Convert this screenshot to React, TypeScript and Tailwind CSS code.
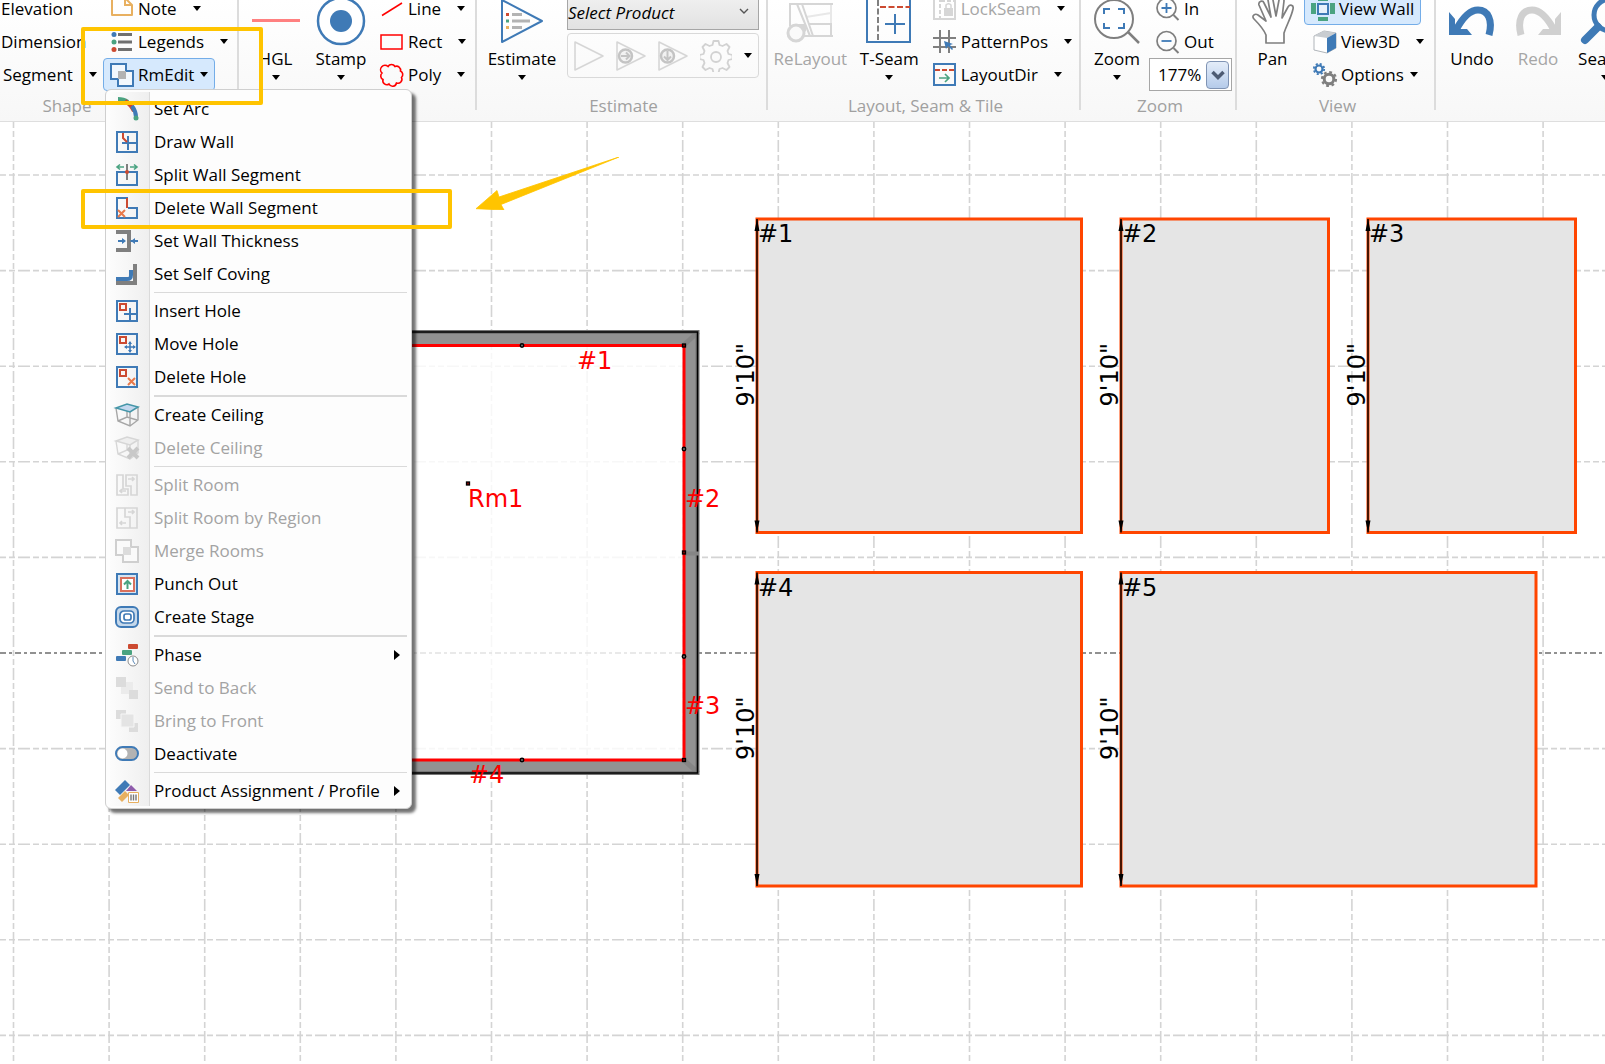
import type { ReactNode } from 'react';
import clsx from 'clsx';

const BLUE = '#3f7ab6';
const GRAY = '#7f7f7f';
const RED = '#cc4a31';
const GREEN = '#4aa381';
const ORANGE = '#e8b060';
const FAINT = '#d6d6d6';

interface SvgProps {
  children: ReactNode;
  size?: 'sm' | 'lg';
}

const Icon = ({ children, size = 'sm' }: SvgProps) => (
  <svg
    viewBox={size === 'sm' ? '0 0 24 24' : '0 0 48 48'}
    className={clsx('shrink-0 overflow-visible', size === 'sm' ? 'h-6 w-6' : 'h-12 w-12')}
    fill="none"
    aria-hidden="true"
  >
    {children}
  </svg>
);

const Caret = () => (
  <svg viewBox="0 0 8 5" className="h-[5px] w-2 shrink-0" aria-hidden="true">
    <path d="M0 0h8L4 5z" fill="#000" />
  </svg>
);

/* ---------- Ribbon icons ---------- */

const NoteIcon = () => (
  <Icon>
    <path d="M2 1h13l7 7v10H2z" stroke={ORANGE} strokeWidth="2" strokeLinejoin="round" />
    <path d="M15 1v7h7" stroke={ORANGE} strokeWidth="2" />
  </Icon>
);

const LegendsIcon = () => (
  <Icon>
    <circle cx="4" cy="4.500" r="2.500" fill={BLUE} />
    <circle cx="4" cy="12" r="2.500" fill={GREEN} />
    <circle cx="4" cy="19.500" r="2.500" fill={RED} />
    <path d="M8 4.500h14M8 12h14M8 19.500h14" stroke="#707070" strokeWidth="3" />
  </Icon>
);

const MergeIcon = ({ muted = false }: { muted?: boolean }) => (
  <Icon>
    <path
      d="M1 1h15v7h7v15H8v-7H1z"
      stroke={muted ? '#cfcfcf' : BLUE}
      strokeWidth="2"
      fill={muted ? '#fafafa' : '#f3f8fd'}
    />
    <path d="M8 8h8v8H8z" fill={muted ? '#dcdcdc' : '#b3b3b3'} />
  </Icon>
);

const HglIcon = () => (
  <Icon size="lg">
    <path d="M0 23.500h48" stroke="#ff8080" strokeWidth="3" />
  </Icon>
);

const StampIcon = () => (
  <Icon size="lg">
    <circle cx="24" cy="24" r="23" stroke={BLUE} strokeWidth="2.500" fill="#fff" />
    <circle cx="24" cy="24" r="11" fill={BLUE} />
  </Icon>
);

const LineIcon = () => (
  <Icon>
    <path d="M2 18.500 22 6" stroke="#f00" strokeWidth="1.500" />
  </Icon>
);

const RectIcon = () => (
  <Icon>
    <path d="M1 5h21v14H1z" stroke="#f00" strokeWidth="1.500" />
  </Icon>
);

const PolyIcon = () => (
  <Icon>
    <path
      d="M8 3.500A4 4 0 0 1 15 3.500 4 4 0 0 1 20.500 8 4 4 0 0 1 21.500 14.500 4 4 0 0 1 16.500 20 4 4 0 0 1 9 21 4 4 0 0 1 3 16.500 4 4 0 0 1 2 10 4 4 0 0 1 8 3.500z"
      stroke="#f00"
      strokeWidth="1.600"
    />
  </Icon>
);

const EstimateIcon = () => (
  <Icon size="lg">
    <path d="M4 3v42l40-21z" stroke={BLUE} strokeWidth="2" strokeLinejoin="round" />
    <path d="M8 16h3v3H8z" fill={RED} />
    <path d="M8 22.500h3v3H8z" fill={GREEN} />
    <path d="M8 29h3v3H8z" fill={ORANGE} />
    <path d="M14 17.500h10M14 24h18M14 30.500h10" stroke="#b3b3b3" strokeWidth="3" />
  </Icon>
);

const ReLayoutIcon = () => (
  <Icon size="lg">
    <path d="M45 27V7M20 20l25-4" stroke="#e8e8e8" strokeWidth="2" />
    <path d="M4 29V7h43M11 7l13 32M16 7l11 32M18 39h29M23 27h22v12" stroke={FAINT} strokeWidth="2" />
    <circle cx="10" cy="36" r="8" stroke={FAINT} strokeWidth="3" fill="#fafafa" />
    <path d="M11 27h9v8z" fill={FAINT} />
  </Icon>
);

const TSeamIcon = () => (
  <Icon size="lg">
    <path d="M2 2h43v43H2z" stroke={BLUE} strokeWidth="2" />
    <path d="M13 3v42" stroke={GRAY} strokeWidth="2" strokeDasharray="6 2.500" />
    <path d="M15 10h30" stroke={RED} strokeWidth="2" strokeDasharray="6 2.500" />
    <path d="M30 17v20M20 27h20" stroke={BLUE} strokeWidth="2" />
  </Icon>
);

const LockSeamIcon = () => (
  <Icon>
    <path d="M1 0h21v22H1z" stroke={FAINT} strokeWidth="2" />
    <path d="M7 1v20M8 4h14" stroke={FAINT} strokeWidth="2" strokeDasharray="4 2" />
    <path d="M11 11h9v8h-9z" fill={FAINT} />
    <path d="M13 11V8a3 3 0 0 1 5 0v3" stroke={FAINT} strokeWidth="1.500" />
  </Icon>
);

const PatternIcon = () => (
  <Icon>
    <path d="M7 0v23M16 0v23M0 8h23M0 17h23" stroke={GRAY} strokeWidth="2" />
    <path d="M11 11l9 3-3 1 3 4-1 1-4-4-2 3z" fill={BLUE} />
  </Icon>
);

const LayoutDirIcon = () => (
  <Icon>
    <path d="M1 1h21v21H1z" stroke={BLUE} strokeWidth="2" />
    <path d="M2 7h20" stroke={RED} strokeWidth="2" strokeDasharray="5 2" />
    <path d="M6 15h10M12 11l4 4-4 4" stroke={GREEN} strokeWidth="1.700" />
  </Icon>
);

const ZoomIcon = () => (
  <Icon size="lg">
    <circle cx="21" cy="22" r="19" stroke={GRAY} strokeWidth="2" fill="#fff" />
    <path d="M35 35 46 46" stroke={GRAY} strokeWidth="2.500" />
    <path d="M17 12h-6v5M25 12h6v5M17 31h-6v-5M25 31h6v-5" stroke={BLUE} strokeWidth="2" />
  </Icon>
);

const ZoomSmallIcon = ({ plus = false }: { plus?: boolean }) => (
  <Icon>
    <circle cx="10.500" cy="11" r="9.500" stroke={GRAY} strokeWidth="1.700" />
    <path d="M17.500 18l5 5" stroke={GRAY} strokeWidth="2" />
    <path d={plus ? 'M5.500 11h10M10.500 6v10' : 'M5.500 11h10'} stroke={BLUE} strokeWidth="1.800" />
  </Icon>
);

const PanIcon = () => (
  <Icon size="lg">
    <path
      d="M17 46v-8c-2-5-5-9-12-16-3-3 1-6 4-4l8 6-7-16c-1-4 4-5 5-2l7 14-3-17c0-4 5-4 5 0l3 16 3-16c1-3 5-3 5 1l-2 17 6-11c2-3 6-2 5 2-2 9-6 15-9 24v10z"
      stroke={GRAY}
      strokeWidth="1.700"
      fill="#fff"
      strokeLinejoin="round"
    />
  </Icon>
);

const ViewWallIcon = () => (
  <Icon>
    <path d="M7 7h10v10H7z" stroke={BLUE} strokeWidth="2" fill="#e8f1fb" />
    <path d="M0 6h5v11H0zM19 6h5v11h-5zM7 0h10v4H7zM7 20h10v4H7z" fill={GREEN} />
  </Icon>
);

const View3DIcon = () => (
  <Icon>
    <path d="M1 6 11 1l12 2v15l-9 5-13-3z" fill="#fff" stroke="#b0b5ba" />
    <path d="M1 6 11 1l12 2-9 5z" fill="#c9cdd1" />
    <path d="M14 8l9-5v15l-9 5z" fill={BLUE} />
  </Icon>
);

const OptionsIcon = () => (
  <Icon>
    <circle cx="6" cy="6" r="3.500" stroke={BLUE} strokeWidth="2.200" />
    <circle cx="6" cy="6" r="5.200" stroke={BLUE} strokeWidth="1.800" strokeDasharray="2.100 2" />
    <circle cx="16" cy="16" r="4.800" stroke={GRAY} strokeWidth="3" />
    <circle cx="16" cy="16" r="7" stroke={GRAY} strokeWidth="2.200" strokeDasharray="2.800 2.700" />
  </Icon>
);

const UndoIcon = ({ redo = false }: { redo?: boolean }) => (
  <Icon size="lg">
    <g transform={redo ? 'matrix(-1 0 0 1 48 0)' : undefined}>
      <path d="M8 33C15 20 22 13 30 13c10 0 15 10 11 25" stroke={redo ? '#d0d0d0' : BLUE} strokeWidth="7" />
      <path d="M1 15l6 7v10h12l5 6H1z" fill={redo ? '#d0d0d0' : BLUE} />
    </g>
  </Icon>
);

const SearchIcon = () => (
  <Icon size="lg">
    <circle cx="29" cy="18" r="16" stroke={BLUE} strokeWidth="5" />
    <path d="M17 30 4 43" stroke={BLUE} strokeWidth="8" strokeLinecap="round" />
  </Icon>
);

const PlayIcon = ({ arrow }: { arrow?: 'right' | 'down' }) => (
  <svg viewBox="0 0 30 30" className="h-[30px] w-[30px]" fill="none" aria-hidden="true">
    <path d="M1 1v28l28-14z" stroke={FAINT} strokeWidth="1.600" strokeLinejoin="round" />
    {arrow && <circle cx="9.500" cy="15" r="6.500" stroke="#c4c4c4" strokeWidth="2.500" fill="#f2f2f2" />}
    {arrow === 'right' && <path d="M5 15h8M10 11.500l3.500 3.500-3.500 3.500" stroke="#c4c4c4" strokeWidth="2" />}
    {arrow === 'down' && <path d="M9.500 10v9M6 15.500l3.500 3.500 3.500-3.500" stroke="#c4c4c4" strokeWidth="2" />}
  </svg>
);

const GearIcon = () => (
  <svg viewBox="0 0 32 32" className="h-8 w-8" fill="none" aria-hidden="true">
    <path
      d="M13.500 1h5l1 4 3 1 4-2 3 3-2 4 1 3 4 1v4l-4 1-1 3 2 4-3 3-4-2-3 1-1 4h-5l-1-4-3-1-4 2-3-3 2-4-1-3-4-1v-4l4-1 1-3-2-4 3-3 4 2 3-1z"
      stroke="#d2d2d2"
      strokeWidth="1.800"
      strokeLinejoin="round"
    />
    <circle cx="16" cy="17" r="5" stroke="#d2d2d2" strokeWidth="1.800" />
  </svg>
);

/* ---------- Menu icons ---------- */

const SetArcIcon = () => (
  <Icon>
    <path d="M3 2c4 0 7 1 10 3" stroke={GREEN} strokeWidth="4" />
    <path d="M10 4c5 3 7 6 9 10" stroke={RED} strokeWidth="4" />
    <path d="M17 9c3 4 4 7 4 11" stroke={BLUE} strokeWidth="4" />
    <circle cx="21" cy="21" r="2.500" fill={GREEN} />
  </Icon>
);

const DrawWallIcon = () => (
  <Icon>
    <path d="M2 2h20v20H2z" stroke={BLUE} strokeWidth="2" />
    <path d="M13 6v14M7 13h14" stroke={BLUE} strokeWidth="2" />
    <path d="M8 3v5l4 4" stroke={RED} strokeWidth="2" />
  </Icon>
);

const SplitWallIcon = () => (
  <Icon>
    <path d="M2 9h20v13H2z" stroke={BLUE} strokeWidth="2" />
    <path d="M12 1v16" stroke={GRAY} strokeWidth="2" />
    <circle cx="12" cy="9" r="2" fill={RED} />
    <path d="M2 4h7M5 1.500 2 4l3 2.500M22 4h-7M19 1.500 22 4l-3 2.500" stroke={GREEN} strokeWidth="1.600" />
  </Icon>
);

const DeleteWallIcon = () => (
  <Icon>
    <path d="M13 2H2v20h20V12h-9" stroke={BLUE} strokeWidth="2" />
    <path d="M12 2v10" stroke={RED} strokeWidth="2" />
    <path d="M3 14l7 7M10 14l-7 7" stroke="#e8794a" strokeWidth="2" />
  </Icon>
);

const ThicknessIcon = () => (
  <Icon>
    <path d="M1 3h13v18H1" stroke={GRAY} strokeWidth="4" />
    <path d="M3 12h6M15.500 12H23" stroke={BLUE} strokeWidth="2" />
    <path d="M7 9l4 3-4 3zM20 9l-4 3 4 3z" fill={BLUE} />
  </Icon>
);

const CovingIcon = () => (
  <Icon>
    <path d="M1 21h19V2" stroke={GRAY} strokeWidth="4" />
    <path d="M1 17h11c3 0 4-1 4-4V8" stroke={BLUE} strokeWidth="4" />
  </Icon>
);

const HoleIcon = ({ kind }: { kind: 'insert' | 'move' | 'delete' }) => (
  <Icon>
    <path d="M2 2h20v20H2z" stroke={BLUE} strokeWidth="2" />
    <path d="M5 5h6v6H5z" stroke={RED} strokeWidth="2" />
    {kind === 'insert' && <path d="M15 9v13M9 15h13" stroke={BLUE} strokeWidth="2" />}
    {kind === 'move' && (
      <>
        <path d="M15 10v10M10 15h10" stroke={BLUE} strokeWidth="1.600" />
        <path d="M15 9l2 3h-4zM15 21l2-3h-4zM9 15l3-2v4zM21 15l-3-2v4z" fill={BLUE} />
      </>
    )}
    {kind === 'delete' && <path d="M13 13l7 7M20 13l-7 7" stroke="#e8794a" strokeWidth="2" />}
  </Icon>
);

const CeilingIcon = ({ muted = false }: { muted?: boolean }) => (
  <Icon>
    <path
      d="M1 5l2 13 12 5 8-6V4M15 8v15M3 18l9-4 10 3M12 2v12"
      stroke={muted ? FAINT : '#a6a6a6'}
      strokeWidth="1.400"
    />
    <path
      d="M1 5 12 1l11 3-8 5z"
      fill={muted ? '#eee' : '#c3d7ee'}
      stroke={muted ? FAINT : '#4596a8'}
      strokeWidth="1.600"
    />
    {muted && <path d="M13 12l10 10M23 12 13 22" stroke="#c8c8c8" strokeWidth="4" />}
  </Icon>
);

const SplitRoomIcon = () => (
  <Icon>
    <path
      d="M2 2h6v14h5v6H2zM11 2h11v20h-6v-9h-5z M5 18h6M7 16l-2 2 2 2M13 6h6M17 4l2 2-2 2"
      stroke={FAINT}
      strokeWidth="1.700"
    />
  </Icon>
);

const SplitRegionIcon = () => (
  <Icon>
    <path d="M2 2h20v20H2zM10 2v9h5v11M5 17h6M7 15l-2 2 2 2M13 6h6M17 4l2 2-2 2" stroke={FAINT} strokeWidth="1.700" />
  </Icon>
);

const PunchOutIcon = () => (
  <Icon>
    <path d="M2 2h20v20H2z" stroke={BLUE} strokeWidth="2" fill="#d6e4f2" />
    <path d="M6 6h13v13H6z" stroke="#d9705c" strokeWidth="2" fill="#fff" />
    <path d="M12.500 17V9M9 12.500 12.500 9l3.500 3.500" stroke={GREEN} strokeWidth="2" />
  </Icon>
);

const StageIcon = () => (
  <Icon>
    <rect x="1" y="2" width="22" height="20" rx="5" stroke={BLUE} strokeWidth="2" fill="#c5d8eb" />
    <rect x="5" y="6" width="14" height="12" rx="4" stroke={BLUE} strokeWidth="1.700" fill="#fff" />
    <rect x="9" y="9" width="7" height="6" rx="2" stroke={BLUE} strokeWidth="1.700" />
  </Icon>
);

const PhaseIcon = () => (
  <Icon>
    <rect x="13" y="1" width="10" height="5" rx="1" fill={RED} />
    <rect x="7" y="7" width="10" height="5" rx="1" fill={GREEN} />
    <rect x="1" y="13" width="10" height="5" rx="1" fill={BLUE} />
    <circle cx="18" cy="18" r="5" stroke="#8c8c8c" fill="#fff" />
    <path d="M18 14v4l2 3" stroke="#5b88b5" />
  </Icon>
);

const SendBackIcon = () => (
  <Icon>
    <path d="M6 6h12v12H6z" fill="#ebebeb" />
    <path d="M1 1h10v10H1zM14 14h9v9h-9z" fill="#dcdcdc" />
  </Icon>
);

const BringFrontIcon = () => (
  <Icon>
    <path d="M1 1h10v9H1zM14 14h9v9h-9z" fill="#dcdcdc" />
    <path d="M6 5h13v13H6z" fill="#e4e4e4" stroke="#f6f6f6" />
  </Icon>
);

const DeactivateIcon = () => (
  <Icon>
    <rect x="1" y="5" width="22" height="13" rx="6.500" fill="#b3b3b3" stroke={BLUE} strokeWidth="2" />
    <circle cx="7.500" cy="11.500" r="5" fill="#fff" />
  </Icon>
);

const ProductIcon = () => (
  <Icon>
    <path d="M0 11 10 1l5 5L5 16z" fill={BLUE} />
    <path d="M16 6l6 6H11z" fill="#8e5bab" />
    <path d="M3 19l7-7 4 4-7 7z" fill={ORANGE} />
    <path d="M13.500 13.500h10v10h-10z" fill="#fff" stroke={ORANGE} />
    <path d="M16 15.500v6M18.500 15.500v6M21 15.500v6" stroke="#777" strokeWidth="1.400" />
  </Icon>
);

/* ---------- Ribbon ---------- */

interface RowButtonProps {
  icon?: ReactNode;
  label: string;
  caret?: 'near' | 'far';
  active?: boolean;
  disabled?: boolean;
}

const RowButton = ({ icon, label, caret, active, disabled }: RowButtonProps) => (
  <button
    type="button"
    disabled={disabled}
    className={clsx(
      'flex h-[33px] items-center rounded border px-1.5 whitespace-nowrap',
      active ? 'border-[#74ade8] bg-[#d6e9fd]' : 'border-transparent',
      disabled ? 'text-[#a6a6a6]' : 'text-black'
    )}
  >
    {icon}
    <span className={icon ? 'ml-1' : ''}>{label}</span>
    {caret && (
      <span className={caret === 'far' ? 'ml-4' : 'ml-1.5'}>
        <Caret />
      </span>
    )}
  </button>
);

interface BigButtonProps {
  icon: ReactNode;
  label: string;
  caret?: boolean;
  disabled?: boolean;
}

const BigButton = ({ icon, label, caret, disabled }: BigButtonProps) => (
  <button
    type="button"
    disabled={disabled}
    className={clsx(
      'flex flex-col items-center self-start pt-[5px] whitespace-nowrap',
      disabled ? 'text-[#a6a6a6]' : 'text-black'
    )}
  >
    {icon}
    <span className="mt-0.5 mb-1 leading-6">{label}</span>
    {caret && <Caret />}
  </button>
);

interface GroupProps {
  label: string;
  className: string;
  labelClassName?: string;
  children: ReactNode;
}

const Group = ({ label, className, labelClassName = 'pl-1 text-center text-[#a0a0a0]', children }: GroupProps) => (
  <section
    aria-label={label}
    className={clsx('flex shrink-0 flex-col border-r-2 border-[#dcdcdc]', className)}
  >
    <div className="flex h-[99px] shrink-0">{children}</div>
    <div className={clsx('leading-[30px] whitespace-nowrap', labelClassName)}>{label}</div>
  </section>
);

const Ribbon = () => (
  <header className="h-[122px] shrink-0 overflow-hidden border-b border-[#dedede] bg-linear-to-b from-white to-[#f7f7f7]">
    <div className="-mt-2 flex h-[118px]">
      <Group label="Shape" className="w-[239px]" labelClassName="w-[134px] text-center text-[#a0a0a0]">
        <div className="-ml-1.5 flex w-[109px] flex-col items-start">
          <RowButton label="Elevation" />
          <RowButton label="Dimension" />
          <div className="pl-0.5">
            <RowButton label="Segment" caret="far" />
          </div>
        </div>
        <div className="flex flex-col items-start">
          <RowButton icon={<NoteIcon />} label="Note" caret="far" />
          <RowButton icon={<LegendsIcon />} label="Legends" caret="far" />
          <RowButton icon={<MergeIcon />} label="RmEdit" caret="near" active />
        </div>
      </Group>

      <Group label="Tools" className="w-[238px]">
        <div className="flex w-[73px] justify-center">
          <BigButton icon={<HglIcon />} label="HGL" caret />
        </div>
        <div className="flex w-[58px] justify-center">
          <BigButton icon={<StampIcon />} label="Stamp" caret />
        </div>
        <div className="flex flex-col items-start pl-[3px]">
          <RowButton icon={<LineIcon />} label="Line" caret="far" />
          <RowButton icon={<RectIcon />} label="Rect" caret="far" />
          <RowButton icon={<PolyIcon />} label="Poly" caret="far" />
        </div>
      </Group>

      <Group label="Estimate" className="w-[291px]">
        <div className="flex w-[90px] justify-center">
          <BigButton icon={<EstimateIcon />} label="Estimate" caret />
        </div>
        <div className="flex w-48 flex-col gap-[3px] pt-1">
          <div className="relative">
            <select
              aria-label="Product"
              className="h-[34px] w-full appearance-none border border-[#a6a6a6] bg-linear-to-b from-[#f0f0f0] to-[#e2e2e2] text-black italic"
            >
              <option>Select Product</option>
            </select>
            <svg viewBox="0 0 10 6" className="pointer-events-none absolute top-3 right-2.5 h-1.5 w-2.5" fill="none" aria-hidden="true">
              <path d="M1 1l4 4 4-4" stroke="#555" strokeWidth="1.400" />
            </svg>
          </div>
          <div className="flex h-[45px] items-center justify-between rounded border border-[#d9d9d9] px-1.5">
            <button type="button" aria-label="Run" disabled>
              <PlayIcon />
            </button>
            <button type="button" aria-label="Run next" disabled>
              <PlayIcon arrow="right" />
            </button>
            <button type="button" aria-label="Run down" disabled>
              <PlayIcon arrow="down" />
            </button>
            <button type="button" aria-label="Settings" disabled>
              <GearIcon />
            </button>
            <button type="button" aria-label="More">
              <Caret />
            </button>
          </div>
        </div>
      </Group>

      <Group label="Layout, Seam & Tile" className="w-[313px]">
        <div className="flex w-[86px] justify-center">
          <BigButton icon={<ReLayoutIcon />} label="ReLayout" disabled />
        </div>
        <div className="flex w-[74px] justify-center">
          <BigButton icon={<TSeamIcon />} label="T-Seam" caret />
        </div>
        <div className="flex flex-col items-start">
          <RowButton icon={<LockSeamIcon />} label="LockSeam" caret="far" disabled />
          <RowButton icon={<PatternIcon />} label="PatternPos" caret="far" />
          <RowButton icon={<LayoutDirIcon />} label="LayoutDir" caret="far" />
        </div>
      </Group>

      <Group label="Zoom" className="w-[156px]">
        <div className="flex w-[68px] justify-center pl-1">
          <BigButton icon={<ZoomIcon />} label="Zoom" caret />
        </div>
        <div className="flex flex-col items-start">
          <RowButton icon={<ZoomSmallIcon plus />} label="In" />
          <RowButton icon={<ZoomSmallIcon />} label="Out" />
          <div className="flex h-[33px] w-[83px] items-center border border-[#a6a6a6] bg-white pr-0.5 pl-2">
            <input aria-label="Zoom level" defaultValue="177%" className="w-0 flex-1 bg-transparent outline-none" />
            <button
              type="button"
              aria-label="Zoom levels"
              className="flex h-7 w-[23px] items-center justify-center rounded border border-[#8094b4] bg-linear-to-b from-[#e4edf9] to-[#b5cbea]"
            >
              <svg viewBox="0 0 14 10" className="h-2.5 w-3.5" fill="none" aria-hidden="true">
                <path d="M1.500 2 7 7.500 12.500 2" stroke="#4d5b73" strokeWidth="3.500" />
              </svg>
            </button>
          </div>
        </div>
      </Group>

      <Group label="View" className="w-[199px]">
        <div className="flex w-[67px] justify-center pl-1">
          <BigButton icon={<PanIcon />} label="Pan" />
        </div>
        <div className="flex flex-col items-start">
          <RowButton icon={<ViewWallIcon />} label="View Wall" active />
          <div className="flex flex-col items-start pl-0.5">
            <RowButton icon={<View3DIcon />} label="View3D" caret="far" />
            <RowButton icon={<OptionsIcon />} label="Options" caret="near" />
          </div>
        </div>
      </Group>

      <Group label="Edit" className="w-[364px]" labelClassName="pl-1 text-center text-[#f2b48f]">
        <div className="flex w-[72px] justify-center">
          <BigButton icon={<UndoIcon />} label="Undo" />
        </div>
        <div className="flex w-[60px] justify-center">
          <BigButton icon={<UndoIcon redo />} label="Redo" disabled />
        </div>
        <div className="flex w-[74px] justify-center">
          <BigButton icon={<SearchIcon />} label="Search" caret />
        </div>
      </Group>
    </div>
  </header>
);

/* ---------- RmEdit menu ---------- */

interface MenuEntry {
  label: string;
  icon: ReactNode;
  disabled?: boolean;
  submenu?: boolean;
}

const menuSections: MenuEntry[][] = [
  [
    { label: 'Set Arc', icon: <SetArcIcon /> },
    { label: 'Draw Wall', icon: <DrawWallIcon /> },
    { label: 'Split Wall Segment', icon: <SplitWallIcon /> },
    { label: 'Delete Wall Segment', icon: <DeleteWallIcon /> },
    { label: 'Set Wall Thickness', icon: <ThicknessIcon /> },
    { label: 'Set Self Coving', icon: <CovingIcon /> },
  ],
  [
    { label: 'Insert Hole', icon: <HoleIcon kind="insert" /> },
    { label: 'Move Hole', icon: <HoleIcon kind="move" /> },
    { label: 'Delete Hole', icon: <HoleIcon kind="delete" /> },
  ],
  [
    { label: 'Create Ceiling', icon: <CeilingIcon /> },
    { label: 'Delete Ceiling', icon: <CeilingIcon muted />, disabled: true },
  ],
  [
    { label: 'Split Room', icon: <SplitRoomIcon />, disabled: true },
    { label: 'Split Room by Region', icon: <SplitRegionIcon />, disabled: true },
    { label: 'Merge Rooms', icon: <MergeIcon muted />, disabled: true },
    { label: 'Punch Out', icon: <PunchOutIcon /> },
    { label: 'Create Stage', icon: <StageIcon /> },
  ],
  [
    { label: 'Phase', icon: <PhaseIcon />, submenu: true },
    { label: 'Send to Back', icon: <SendBackIcon />, disabled: true },
    { label: 'Bring to Front', icon: <BringFrontIcon />, disabled: true },
    { label: 'Deactivate', icon: <DeactivateIcon /> },
  ],
  [{ label: 'Product Assignment / Profile', icon: <ProductIcon />, submenu: true }],
];

const RmEditMenu = () => (
  <div
    role="menu"
    className="absolute top-[89px] left-[105px] w-[307px] rounded-md border border-[#cfcfcf] bg-[#fdfdfd] pt-0.5 pb-px shadow-[4px_4px_3px_rgba(0,0,0,0.55)]"
  >
    {/* icon gutter */}
    <div className="absolute inset-y-0.5 left-1 w-10 border-r border-[#dadada] bg-linear-to-r from-[#fcfcfc] to-[#efefef]" />
    {menuSections.map((section, i) => (
      <div key={section[0].label} className="relative">
        {i > 0 && <div className={clsx('mt-0.5 mr-1 mb-px ml-12 bg-[#dadada]', i % 2 ? 'h-px' : 'h-0.5')} />}
        {section.map((item) => (
          <button
            key={item.label}
            type="button"
            role="menuitem"
            disabled={item.disabled}
            className={clsx(
              'flex h-[33px] w-full items-center pr-[11px] pl-[9px] text-left whitespace-nowrap',
              item.disabled ? 'text-[#a3a3a3]' : 'text-black'
            )}
          >
            {item.icon}
            <span className="ml-[15px] flex-1">{item.label}</span>
            {item.submenu && (
              <svg viewBox="0 0 6 10" className="h-2.5 w-1.5" aria-hidden="true">
                <path d="M0 0v10l6-5z" fill="#000" />
              </svg>
            )}
          </button>
        ))}
      </div>
    ))}
  </div>
);

/* ---------- Drawing area ---------- */

const GRID = 95.6;
const columns = Array.from({ length: 30 }, (_, i) => 13.5 + i * GRID);
const rows = Array.from({ length: 20 }, (_, i) => 53 + i * GRID);

const walls = [
  { id: '#1', x: 757, y: 97, w: 324.5, h: 313.5 },
  { id: '#2', x: 1121, y: 97, w: 207.5, h: 313.5 },
  { id: '#3', x: 1368, y: 97, w: 207.5, h: 313.5 },
  { id: '#4', x: 757, y: 450.5, w: 324.5, h: 313.5 },
  { id: '#5', x: 1121, y: 450.5, w: 415, h: 313.5 },
];

const roundNodes = [[522, 223.5], [684, 327], [684, 534.5], [522, 638]];
const squareNodes = [[684, 223.5], [684, 430.5], [684, 638], [468, 361.5]];

const roomLabels = [
  { text: '#1', x: 577, y: 247 },
  { text: '#2', x: 685, y: 385 },
  { text: '#3', x: 685, y: 592 },
  { text: '#4', x: 469, y: 661 },
  { text: 'Rm1', x: 468, y: 385 },
];

const Room = () => (
  <g>
    <rect x="360" y="223" width="324" height="415" fill="#fff" fillOpacity="0.8" />
    <path d="M346 210h352v441H346zM360 223v415h324V223z" fill="#929292" fillRule="evenodd" />
    <path d="M684 223l14-13M684 638l14 13" stroke="#858585" strokeWidth="5" />
    <rect x="346" y="210" width="351.5" height="441" fill="none" stroke="#777" strokeWidth="4" />
    <rect x="346" y="210" width="351.5" height="441" fill="none" stroke="#000" strokeWidth="1.5" />
    <path d="M684 431.500h15" stroke="#858585" strokeWidth="4" />
    <rect x="360" y="223.5" width="324" height="414.500" fill="none" stroke="#f00" strokeWidth="3" />
    {roundNodes.map(([x, y]) => (
      <circle key={`${x}-${y}`} cx={x} cy={y} r="1.700" fill="#777" stroke="#000" strokeWidth="1.500" />
    ))}
    {squareNodes.map(([x, y]) => (
      <rect key={`${x}-${y}`} x={x - 1.5} y={y - 1.5} width="3" height="3" fill="#800" stroke="#000" strokeWidth="1.300" />
    ))}
    {roomLabels.map((l) => (
      <text key={l.text} x={l.x} y={l.y} fill="#f00">
        {l.text}
      </text>
    ))}
  </g>
);

const Drawing = () => (
  <svg className="absolute inset-0 h-full w-full font-['DejaVu_Sans',sans-serif] text-[24px]" aria-label="Floor plan">
    <g stroke="#d4d4d4" strokeWidth="1.600" strokeDasharray="6 3 6 3 12 3">
      {columns.map((x) => (
        <line key={x} x1={x} x2={x} y1="0" y2="100%" />
      ))}
      {rows.map((y, i) => (
        <line
          key={y}
          x1="0"
          x2="100%"
          y1={y}
          y2={y}
          stroke={i === 5 ? '#6e6e6e' : undefined}
          strokeDasharray={i === 5 ? '6 3 3 3' : undefined}
        />
      ))}
    </g>
    <Room />
    {walls.map(({ id, x, y, w, h }) => (
      <g key={id}>
        <rect x={x} y={y} width={w} height={h} fill="#e5e5e5" stroke="#ff4500" strokeWidth="3" />
        <line x1={x} x2={x} y1={y} y2={y + h} stroke="#1a0800" strokeWidth="1.600" />
        <path d={`M${x} ${y}l-2.500 12h5zM${x} ${y + h}l-2.500-12h5z`} fill="#000" />
        <text x={x + 1} y={y + 23}>
          {id}
        </text>
        <text transform={`translate(${x - 3} ${y + h / 2 - 1}) rotate(-90)`} textAnchor="middle">
          9'10"
        </text>
      </g>
    ))}
  </svg>
);

/* ---------- Callouts ---------- */

const Callouts = () => (
  <div className="pointer-events-none absolute inset-0">
    <div className="absolute top-[27px] left-[81px] h-[78px] w-[182px] rounded-xs border-4 border-[#ffc400]" />
    <div className="absolute top-[189px] left-[81px] h-10 w-[371px] rounded-xs border-4 border-[#ffc400]" />
    <svg viewBox="0 0 143 53" className="absolute top-[157px] left-[476px] h-[53px] w-[143px]" aria-hidden="true">
      <path d="M0 51.700 21 33.500l2 6.500L143 0 25 47.500l3 5.500z" fill="#ffc400" stroke="#ffc400" strokeWidth="0.800" />
    </svg>
  </div>
);

const App = () => (
  <div className="relative flex min-h-screen flex-col overflow-hidden bg-white font-['Open_Sans','Noto_Sans',sans-serif] text-[17px]">
    <Ribbon />
    <main className="relative flex-1">
      <Drawing />
    </main>
    <RmEditMenu />
    <Callouts />
  </div>
);

export default App;
